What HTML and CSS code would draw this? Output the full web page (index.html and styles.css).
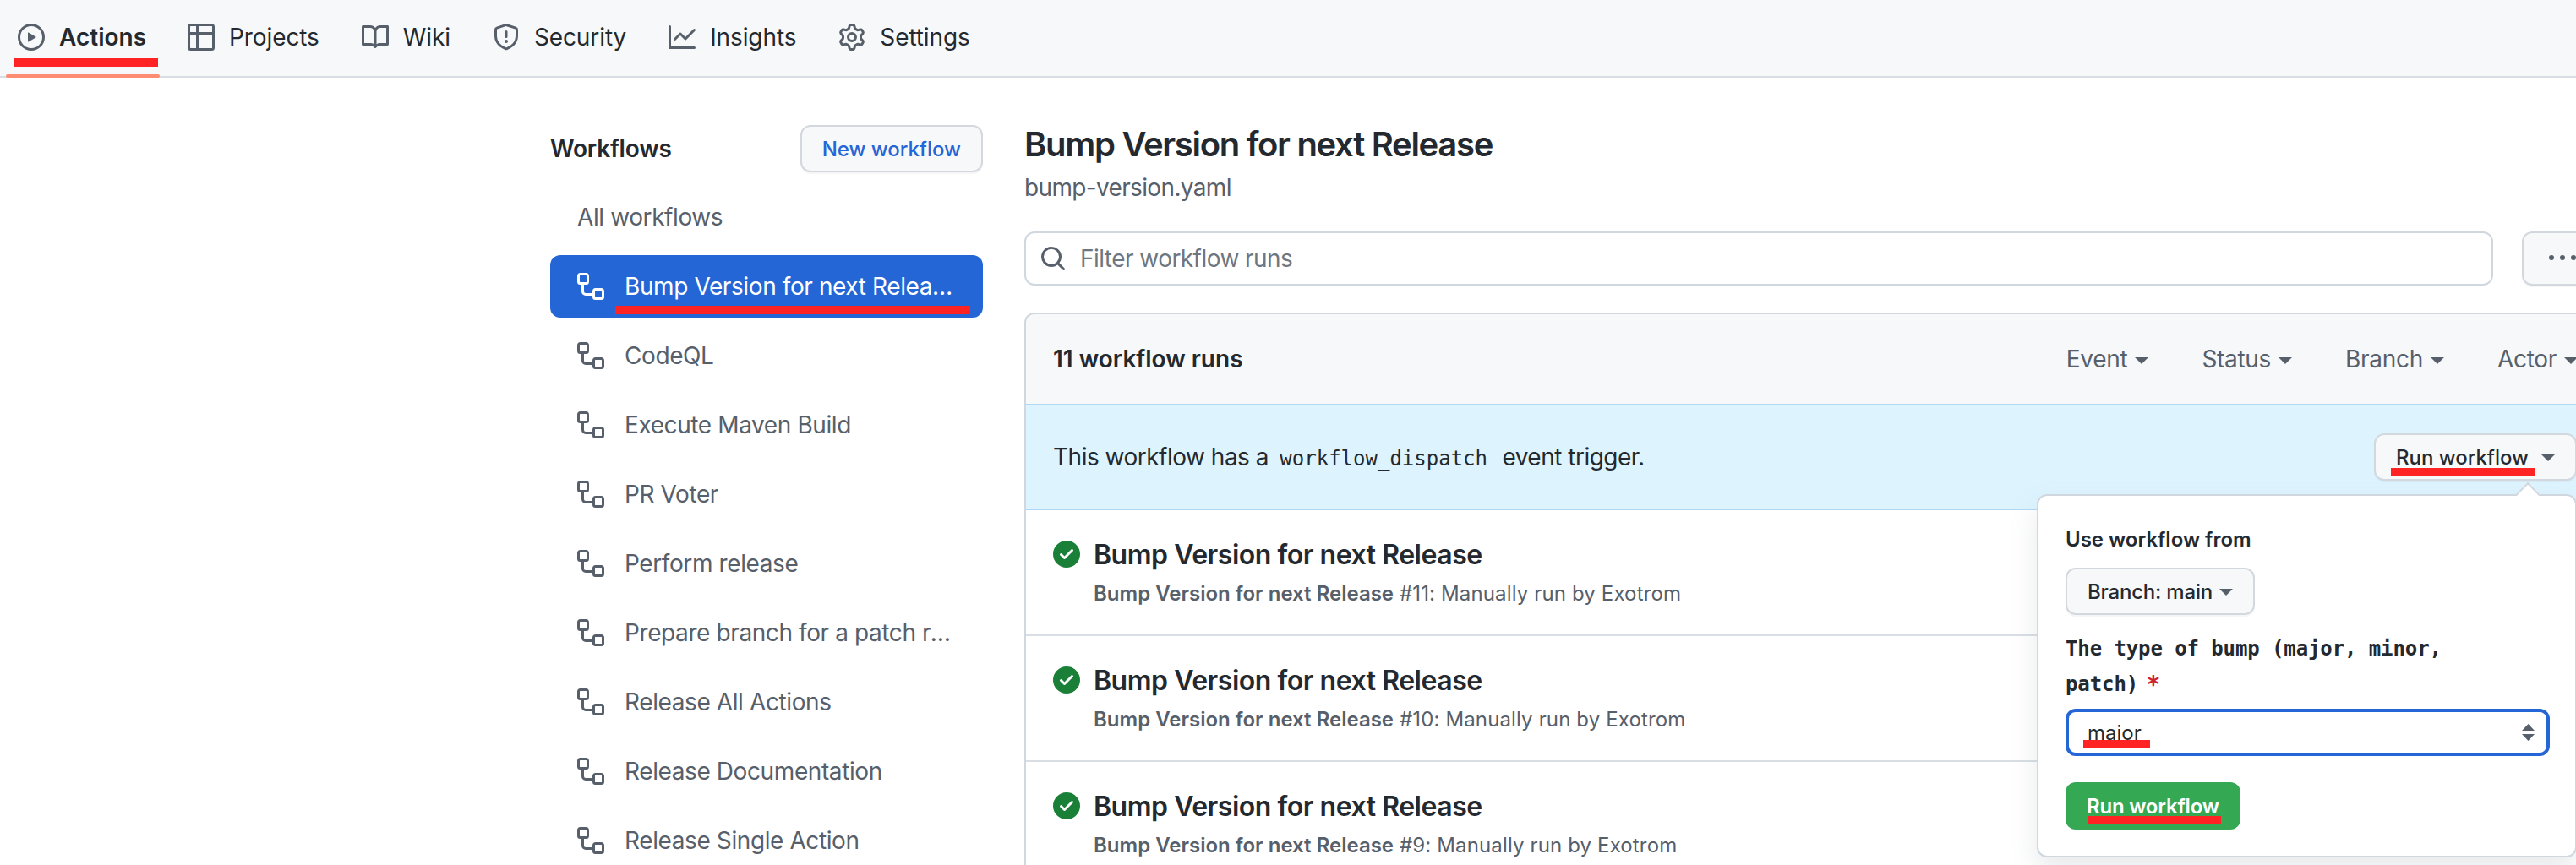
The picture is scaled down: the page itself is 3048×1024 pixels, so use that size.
FILE: index.html
```html
<!DOCTYPE html>
<html lang="en">
<head>
<meta charset="utf-8">
<title>Actions</title>
<link rel="stylesheet" href="styles.css">
</head>
<body>
<svg class="defs" width="0" height="0" aria-hidden="true">
  <symbol id="i-play" viewBox="0 0 16 16"><path d="M8 0a8 8 0 1 1 0 16A8 8 0 0 1 8 0ZM1.5 8a6.5 6.5 0 1 0 13 0 6.5 6.5 0 0 0-13 0Zm4.879-2.773 4.264 2.559a.25.25 0 0 1 0 .428l-4.264 2.559A.25.25 0 0 1 6 10.559V5.442a.25.25 0 0 1 .379-.215Z"/></symbol>
  <symbol id="i-table" viewBox="0 0 16 16"><path d="M0 1.75C0 .784.784 0 1.75 0h12.5C15.216 0 16 .784 16 1.75v12.5A1.75 1.75 0 0 1 14.25 16H1.75A1.75 1.75 0 0 1 0 14.25ZM6.5 6.5v8h7.75a.25.25 0 0 0 .25-.25V6.5Zm8-1.5V1.75a.25.25 0 0 0-.25-.25H6.5V5Zm-13 1.5v7.75c0 .138.112.25.25.25H5v-8ZM5 5V1.5H1.75a.25.25 0 0 0-.25.25V5Z"/></symbol>
  <symbol id="i-book" viewBox="0 0 16 16"><path d="M0 1.75A.75.75 0 0 1 .75 1h4.253c1.227 0 2.317.59 3 1.501A3.743 3.743 0 0 1 11.006 1h4.245a.75.75 0 0 1 .75.75v10.5a.75.75 0 0 1-.75.75h-4.507a2.25 2.25 0 0 0-1.591.659l-.622.621a.75.75 0 0 1-1.06 0l-.622-.621A2.25 2.25 0 0 0 5.258 13H.75a.75.75 0 0 1-.75-.75Zm7.251 10.324.004-5.073-.002-2.253A2.25 2.25 0 0 0 5.003 2.5H1.5v9h3.757a3.75 3.75 0 0 1 1.994.574ZM8.755 4.75l-.004 7.322a3.752 3.752 0 0 1 1.992-.572H14.5v-9h-3.495a2.25 2.25 0 0 0-2.25 2.25Z"/></symbol>
  <symbol id="i-shield" viewBox="0 0 16 16"><path d="M7.467.133a1.748 1.748 0 0 1 1.066 0l5.25 1.68A1.75 1.75 0 0 1 15 3.48V7c0 1.566-.32 3.182-1.303 4.682-.983 1.498-2.585 2.813-5.032 3.855a1.697 1.697 0 0 1-1.33 0c-2.447-1.042-4.049-2.357-5.032-3.855C1.32 10.182 1 8.566 1 7V3.48a1.75 1.75 0 0 1 1.217-1.667Zm.61 1.429a.25.25 0 0 0-.153 0l-5.25 1.68a.25.25 0 0 0-.174.238V7c0 1.358.275 2.666 1.057 3.86.784 1.194 2.121 2.34 4.366 3.297a.196.196 0 0 0 .154 0c2.245-.956 3.582-2.104 4.366-3.298C13.225 9.666 13.5 8.36 13.5 7V3.48a.251.251 0 0 0-.174-.237l-5.25-1.68ZM8.75 4.75v3a.75.75 0 0 1-1.5 0v-3a.75.75 0 0 1 1.5 0ZM9 10.5a1 1 0 1 1-2 0 1 1 0 0 1 2 0Z"/></symbol>
  <symbol id="i-graph" viewBox="0 0 16 16"><path d="M1.5 1.75V13.5h13.75a.75.75 0 0 1 0 1.5H.75a.75.75 0 0 1-.75-.75V1.75a.75.75 0 0 1 1.5 0Zm14.28 2.53-5.25 5.25a.75.75 0 0 1-1.06 0L7 7.06 4.28 9.78a.751.751 0 0 1-1.042-.018.751.751 0 0 1-.018-1.042l3.25-3.25a.75.75 0 0 1 1.06 0L10 7.94l4.72-4.72a.751.751 0 0 1 1.042.018.751.751 0 0 1 .018 1.042Z"/></symbol>
  <symbol id="i-gear" viewBox="0 0 16 16"><path d="M8 0a8.2 8.2 0 0 1 .701.031C9.444.095 9.99.645 10.16 1.29l.288 1.107c.018.066.079.158.212.224.231.114.454.243.668.386.123.082.233.09.299.071l1.103-.303c.644-.176 1.392.021 1.82.63.27.385.506.792.704 1.218.315.675.111 1.422-.364 1.891l-.814.806c-.049.048-.098.147-.088.294.016.257.016.515 0 .772-.01.147.038.246.088.294l.814.806c.475.469.679 1.216.364 1.891a7.977 7.977 0 0 1-.704 1.217c-.428.61-1.176.807-1.82.63l-1.102-.302c-.067-.019-.177-.011-.3.071a5.909 5.909 0 0 1-.668.386c-.133.066-.194.158-.211.224l-.29 1.106c-.168.646-.715 1.196-1.458 1.26a8.006 8.006 0 0 1-1.402 0c-.743-.064-1.289-.614-1.458-1.26l-.289-1.106c-.018-.066-.079-.158-.212-.224a5.738 5.738 0 0 1-.668-.386c-.123-.082-.233-.09-.299-.071l-1.103.303c-.644.176-1.392-.021-1.82-.63a8.12 8.12 0 0 1-.704-1.218c-.315-.675-.111-1.422.363-1.891l.815-.806c.05-.048.098-.147.088-.294a6.214 6.214 0 0 1 0-.772c.01-.147-.038-.246-.088-.294l-.815-.806C.635 6.045.431 5.298.746 4.623a7.92 7.92 0 0 1 .704-1.217c.428-.61 1.176-.807 1.82-.63l1.102.302c.067.019.177.011.3-.071.214-.143.437-.272.668-.386.133-.066.194-.158.211-.224l.29-1.106C6.009.645 6.556.095 7.299.03 7.53.01 7.764 0 8 0Zm-.571 1.525c-.036.003-.108.036-.137.146l-.289 1.105c-.147.561-.549.967-.998 1.189-.173.086-.34.183-.5.29-.417.278-.97.423-1.529.27l-1.103-.303c-.109-.03-.175.016-.195.045-.22.312-.412.644-.573.99-.014.031-.021.11.059.19l.815.806c.411.406.562.957.53 1.456a4.709 4.709 0 0 0 0 .582c.032.499-.119 1.05-.53 1.456l-.815.806c-.081.08-.073.159-.059.19.162.346.353.677.573.989.02.03.085.076.195.046l1.102-.303c.56-.153 1.113-.008 1.53.27.161.107.328.204.501.29.447.222.85.629.997 1.189l.289 1.105c.029.109.101.143.137.146a6.6 6.6 0 0 0 1.142 0c.036-.003.108-.036.137-.146l.289-1.105c.147-.561.549-.967.998-1.189.173-.086.34-.183.5-.29.417-.278.97-.423 1.529-.27l1.103.303c.109.029.175-.016.195-.045.22-.313.411-.644.573-.99.014-.031.021-.11-.059-.19l-.815-.806c-.411-.406-.562-.957-.53-1.456a4.709 4.709 0 0 0 0-.582c-.032-.499.119-1.05.53-1.456l.815-.806c.081-.08.073-.159.059-.19a6.464 6.464 0 0 0-.573-.989c-.02-.03-.085-.076-.195-.046l-1.102.303c-.56.153-1.113.008-1.53-.27a4.44 4.44 0 0 0-.501-.29c-.447-.222-.85-.629-.997-1.189l-.289-1.105c-.029-.11-.101-.143-.137-.146a6.6 6.6 0 0 0-1.142 0ZM11 8a3 3 0 1 1-6 0 3 3 0 0 1 6 0ZM9.5 8a1.5 1.5 0 1 0-3.001.001A1.5 1.5 0 0 0 9.5 8Z"/></symbol>
  <symbol id="i-workflow" viewBox="0 0 16 16"><path d="M0 1.75C0 .784.784 0 1.75 0h3.5C6.216 0 7 .784 7 1.75v3.5A1.75 1.75 0 0 1 5.25 7H4v4a1 1 0 0 0 1 1h4v-1.25C9 9.784 9.784 9 10.75 9h3.5c.966 0 1.75.784 1.75 1.75v3.5A1.75 1.75 0 0 1 14.25 16h-3.5A1.75 1.75 0 0 1 9 14.25v-.75H5A2.5 2.5 0 0 1 2.5 11V7h-.75A1.75 1.75 0 0 1 0 5.25Zm1.75-.25a.25.25 0 0 0-.25.25v3.5c0 .138.112.25.25.25h3.5a.25.25 0 0 0 .25-.25v-3.5a.25.25 0 0 0-.25-.25Zm9 9a.25.25 0 0 0-.25.25v3.5c0 .138.112.25.25.25h3.5a.25.25 0 0 0 .25-.25v-3.5a.25.25 0 0 0-.25-.25Z"/></symbol>
  <symbol id="i-search" viewBox="0 0 16 16"><path d="M10.68 11.74a6 6 0 0 1-7.922-8.982 6 6 0 0 1 8.982 7.922l3.04 3.04a.749.749 0 0 1-.326 1.275.749.749 0 0 1-.734-.215ZM11.5 7a4.499 4.499 0 1 0-8.997 0A4.499 4.499 0 0 0 11.5 7Z"/></symbol>
  <symbol id="i-check" viewBox="0 0 16 16"><path d="M8 16A8 8 0 1 1 8 0a8 8 0 0 1 0 16Zm3.78-9.72a.751.751 0 0 0-.018-1.042.751.751 0 0 0-1.042-.018L6.75 9.19 5.28 7.72a.751.751 0 0 0-1.042.018.751.751 0 0 0-.018 1.042l2 2a.75.75 0 0 0 1.06 0Z"/></symbol>
  <symbol id="i-kebab" viewBox="0 0 16 16"><path d="M8 9a1.5 1.5 0 1 0 0-3 1.5 1.5 0 0 0 0 3ZM1.5 9a1.5 1.5 0 1 0 0-3 1.5 1.5 0 0 0 0 3Zm13 0a1.5 1.5 0 1 0 0-3 1.5 1.5 0 0 0 0 3Z"/></symbol>
</svg>

<nav class="tabs">
  <a class="tab tab-active"><svg class="icon"><use href="#i-play"/></svg><span>Actions</span><i class="mark mark-tab"></i></a>
  <a class="tab"><svg class="icon"><use href="#i-table"/></svg><span>Projects</span></a>
  <a class="tab"><svg class="icon"><use href="#i-book"/></svg><span>Wiki</span></a>
  <a class="tab"><svg class="icon"><use href="#i-shield"/></svg><span>Security</span></a>
  <a class="tab"><svg class="icon"><use href="#i-graph"/></svg><span>Insights</span></a>
  <a class="tab"><svg class="icon"><use href="#i-gear"/></svg><span>Settings</span></a>
</nav>

<div class="page">
  <aside class="sidebar">
    <div class="side-head">
      <h2 class="side-title">Workflows</h2>
      <a class="btn btn-new">New workflow</a>
    </div>
    <ul class="side-list">
      <li class="side-item side-plain">All workflows</li>
      <li class="side-item side-selected"><svg class="icon"><use href="#i-workflow"/></svg><span class="side-text">Bump Version for next Release</span><i class="mark mark-side"></i></li>
      <li class="side-item"><svg class="icon"><use href="#i-workflow"/></svg><span class="side-text">CodeQL</span></li>
      <li class="side-item"><svg class="icon"><use href="#i-workflow"/></svg><span class="side-text">Execute Maven Build</span></li>
      <li class="side-item"><svg class="icon"><use href="#i-workflow"/></svg><span class="side-text">PR Voter</span></li>
      <li class="side-item"><svg class="icon"><use href="#i-workflow"/></svg><span class="side-text">Perform release</span></li>
      <li class="side-item"><svg class="icon"><use href="#i-workflow"/></svg><span class="side-text">Prepare branch for a patch release</span></li>
      <li class="side-item"><svg class="icon"><use href="#i-workflow"/></svg><span class="side-text">Release All Actions</span></li>
      <li class="side-item"><svg class="icon"><use href="#i-workflow"/></svg><span class="side-text">Release Documentation</span></li>
      <li class="side-item"><svg class="icon"><use href="#i-workflow"/></svg><span class="side-text">Release Single Action</span></li>
    </ul>
  </aside>

  <main class="main">
    <h1 class="title">Bump Version for next Release</h1>
    <div class="file">bump-version.yaml</div>

    <div class="filter-row">
      <div class="filter"><svg class="icon icon-search"><use href="#i-search"/></svg><span>Filter workflow runs</span></div>
      <a class="btn btn-more"><svg class="icon"><use href="#i-kebab"/></svg></a>
    </div>

    <section class="panel">
      <header class="panel-head">
        <strong class="count">11 workflow runs</strong>
        <div class="menus">
          <span class="menu">Event<i class="caret"></i></span>
          <span class="menu">Status<i class="caret"></i></span>
          <span class="menu">Branch<i class="caret"></i></span>
          <span class="menu">Actor<i class="caret"></i></span>
        </div>
      </header>

      <div class="banner">
        <p class="banner-text">This workflow has a <code class="code">workflow_dispatch</code> event trigger.</p>
        <div class="run-wrap">
          <a class="btn btn-run">Run workflow<i class="caret caret-dark"></i><i class="mark mark-run"></i></a>
          <div class="popover">
            <i class="arrow"></i>
            <div class="pop-label">Use workflow from</div>
            <a class="btn btn-branch">Branch: main<i class="caret caret-dark"></i></a>
            <div class="field-label">The type of bump (major, minor,<br>patch) <span class="req">*</span></div>
            <div class="select">major
              <svg class="updown" viewBox="0 0 15 20"><path d="M7.5 0 15 8H0ZM7.5 20 0 12h15Z"/></svg>
              <i class="mark mark-select"></i>
            </div>
            <a class="btn-green">Run workflow<i class="mark mark-green"></i></a>
          </div>
        </div>
      </div>

      <article class="run">
        <svg class="icon icon-ok"><use href="#i-check"/></svg>
        <div class="run-body">
          <div class="run-title">Bump Version for next Release</div>
          <div class="run-sub"><b>Bump Version for next Release</b> #11: Manually run by Exotrom</div>
        </div>
      </article>
      <article class="run">
        <svg class="icon icon-ok"><use href="#i-check"/></svg>
        <div class="run-body">
          <div class="run-title">Bump Version for next Release</div>
          <div class="run-sub"><b>Bump Version for next Release</b> #10: Manually run by Exotrom</div>
        </div>
      </article>
      <article class="run">
        <svg class="icon icon-ok"><use href="#i-check"/></svg>
        <div class="run-body">
          <div class="run-title">Bump Version for next Release</div>
          <div class="run-sub"><b>Bump Version for next Release</b> #9: Manually run by Exotrom</div>
        </div>
      </article>
    </section>
  </main>
</div>
</body>
</html>
```
FILE: styles.css
```css
* { box-sizing: border-box; }
html, body { margin: 0; padding: 0; width: 3048px; height: 1024px; overflow: hidden; background: #fff; }
body { font-family: Inter, "Noto Sans", sans-serif; font-size: 28px; color: #24292f; }
.defs { position: absolute; }
h1, h2, p, ul { margin: 0; padding: 0; }
ul { list-style: none; }

.icon { width: 32px; height: 32px; flex: none; fill: #57606a; display: block; }

.mark { position: absolute; display: block; height: 10px; background: #ff2323; }
.mark-tab { left: 10px; width: 170px; top: 69px; }
.mark-side { left: 77px; width: 420px; top: 60px; }
.mark-run { left: 18px; width: 170px; top: 39px; }
.mark-select { left: 17px; width: 79px; top: 33px; }
.mark-green { left: 26px; width: 158px; top: 40px; }

.tabs { display: flex; gap: 18px; height: 92px; padding-left: 7px; background: #f6f8fa; border-bottom: 2px solid #d8dee4; }
.tab { position: relative; display: flex; align-items: center; gap: 17px; padding: 0 16px 2px 14px; color: #24292f; letter-spacing: -0.1px; }
.tab + .tab { padding-left: 16px; }
.tab-active { font-weight: 600; letter-spacing: 0; margin-right: -1px; }
.tab-active::after { content: ""; position: absolute; left: 0; right: 0; bottom: -2px; height: 4px; border-radius: 2px; background: #fd8c73; }

.page { display: flex; gap: 49px; width: 3082px; padding: 50px 0 0 651px; }
.sidebar { width: 512px; flex: none; padding-top: 6px; }
.side-head { display: flex; justify-content: space-between; align-items: center; }
.side-title { font-size: 28px; font-weight: 600; letter-spacing: -0.2px; }
.btn { display: inline-flex; align-items: center; border: 2px solid #d3d8de; border-radius: 12px; background: #f6f8fa; box-shadow: 0 2px 0 rgba(27,31,36,.04); font-size: 24px; font-weight: 500; white-space: nowrap; }
.btn-new { height: 56px; padding: 0 24px 0 24px; color: #2566d6; }
.side-list { display: flex; flex-direction: column; gap: 8px; margin-top: 16px; }
.side-item { position: relative; display: flex; align-items: center; gap: 24px; height: 74px; padding: 0 32px; border-radius: 12px; color: #57606a; letter-spacing: -0.4px; }
.side-text { flex: 1; min-width: 0; white-space: nowrap; overflow: hidden; text-overflow: ellipsis; }
.side-selected { background: #2566d6; color: #fff; }
.side-selected .icon { fill: #fff; }

.main { flex: 1; min-width: 0; }
.title { font-size: 40px; font-weight: 600; line-height: 58px; padding-bottom: 2px; letter-spacing: -1.3px; }
.file { line-height: 40px; color: #57606a; letter-spacing: -0.65px; }
.filter-row { display: flex; gap: 34px; margin-top: 32px; }
.filter { display: flex; align-items: center; gap: 16px; flex: 1; height: 64px; padding-left: 16px; border: 2px solid #d0d7de; border-radius: 12px; color: #6e7781; letter-spacing: -0.55px; }
.btn-more { width: 98px; padding-left: 30px; }

.panel { position: relative; margin-top: 32px; border-left: 2px solid #d0d7de; border-top: 2px solid #d0d7de; border-top-left-radius: 12px; }
.panel-head { display: flex; align-items: center; justify-content: space-between; height: 106px; padding: 0 32px; background: #f6f8fa; border-top-left-radius: 12px; }
.count { font-weight: 600; }
.menus { display: flex; gap: 63px; }
.menu { display: flex; align-items: center; gap: 9px; color: #57606a; letter-spacing: -0.3px; }
.caret { display: block; width: 0; height: 0; border-left: 8px solid transparent; border-right: 8px solid transparent; border-top: 8px solid #57606a; margin-top: 4px; }
.caret-dark { margin-top: 2px; }

.banner { display: flex; align-items: center; justify-content: space-between; height: 126px; padding: 0 33px 0 32px; background: #ddf4ff; border-top: 2px solid #b0d8f5; border-bottom: 2px solid #b0d8f5; }
.banner-text { letter-spacing: -0.5px; }
.code { font-family: "DejaVu Sans Mono", "Liberation Mono", monospace; font-size: 24px; padding: 0 10px 0 6px; letter-spacing: 0; }
.run-wrap { position: relative; }
.btn-run { position: relative; height: 56px; padding: 0 24px; gap: 15px; color: #24292f; }

.popover { position: absolute; right: 0; top: 72px; width: 639px; height: 430px; padding: 34px 30px 0 32px; background: #fff; border: 2px solid #d0d7de; border-radius: 12px; box-shadow: 0 16px 32px rgba(140,149,159,.2); z-index: 2; display: flex; flex-direction: column; align-items: flex-start; }
.arrow { position: absolute; right: 46px; top: -12px; width: 20px; height: 20px; background: #fff; border-top: 2px solid #d0d7de; border-left: 2px solid #d0d7de; transform: rotate(45deg); }
.pop-label { font-size: 24px; font-weight: 600; line-height: 36px; }
.btn-branch { height: 56px; margin-top: 15px; padding: 0 24px; gap: 8px; color: #24292f; font-weight: 500; letter-spacing: -0.2px; }
.field-label { margin-top: 19px; font-family: "DejaVu Sans Mono", "Liberation Mono", monospace; font-size: 24px; font-weight: 700; line-height: 42px; letter-spacing: -0.1px; }
.req { color: #cf222e; font-size: 28px; line-height: 24px; vertical-align: -2px; margin-left: -5px; }
.select { position: relative; display: flex; align-items: center; justify-content: space-between; width: 100%; height: 56px; margin-top: 8px; padding: 0 14px 0 22px; border: 4px solid #2566d6; border-radius: 12px; font-size: 24px; }
.updown { width: 15px; height: 20px; fill: #57606a; }
.btn-green { position: relative; display: flex; align-items: center; height: 56px; margin-top: 31px; padding: 0 25px; border-radius: 12px; background: #34a853; color: #fff; font-size: 24px; font-weight: 600; letter-spacing: -0.2px; }

.run { display: flex; gap: 16px; height: 149px; padding: 36px 0 0 32px; border-bottom: 2px solid #d8dee4; }
.icon-ok { fill: #1a7f37; }
.run-title { font-size: 32px; font-weight: 600; line-height: 34px; letter-spacing: -0.47px; }
.run-sub { margin-top: 12px; font-size: 24px; line-height: 34px; color: #57606a; letter-spacing: 0.14px; }
.run-sub b { font-weight: 600; letter-spacing: 0; }
```
